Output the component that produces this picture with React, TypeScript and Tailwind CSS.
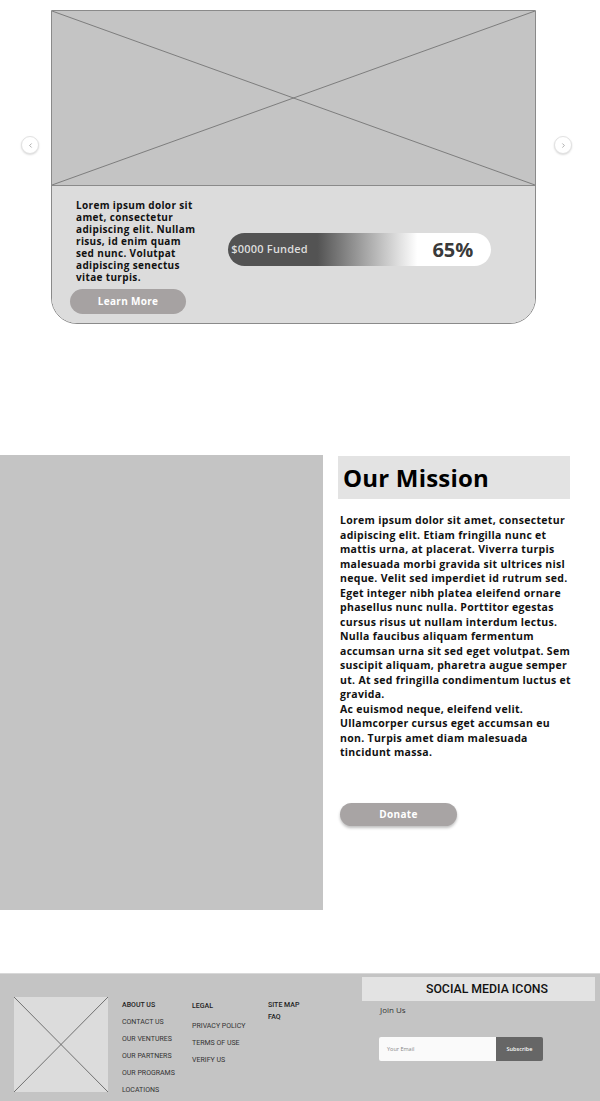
import { ChevronLeft, ChevronRight } from 'lucide-react'

const missionLines = [
  'Lorem ipsum dolor sit amet, consectetur',
  'adipiscing elit. Etiam fringilla nunc et',
  'mattis urna, at placerat. Viverra turpis',
  'malesuada morbi gravida sit ultrices nisl',
  'neque. Velit sed imperdiet id rutrum sed.',
  'Eget integer nibh platea eleifend ornare',
  'phasellus nunc nulla. Porttitor egestas',
  'cursus risus ut nullam interdum lectus.',
  'Nulla faucibus aliquam fermentum',
  'accumsan urna sit sed eget volutpat. Sem',
  'suscipit aliquam, pharetra augue semper',
  'ut. At sed fringilla condimentum luctus et',
  'gravida.',
  'Ac euismod neque, eleifend velit.',
  'Ullamcorper cursus eget accumsan eu',
  'non. Turpis amet diam malesuada',
  'tincidunt massa.',
]

const cardLines = [
  'Lorem ipsum dolor sit',
  'amet, consectetur',
  'adipiscing elit. Nullam',
  'risus, id enim quam',
  'sed nunc. Volutpat',
  'adipiscing senectus',
  'vitae turpis.',
]

const aboutLinks = ['CONTACT US', 'OUR VENTURES', 'OUR PARTNERS', 'OUR PROGRAMS', 'LOCATIONS']
const legalLinks = ['PRIVACY POLICY', 'TERMS OF USE', 'VERIFY US']

// placeholder image with a cross
function Cross({ stroke = '#6b6b6b' }: { stroke?: string }) {
  return (
    <svg className="absolute inset-0 w-full h-full" viewBox="0 0 100 100" preserveAspectRatio="none">
      <line x1="0" y1="0" x2="100" y2="100" stroke={stroke} strokeWidth="0.8" vectorEffect="non-scaling-stroke" />
      <line x1="100" y1="0" x2="0" y2="100" stroke={stroke} strokeWidth="0.8" vectorEffect="non-scaling-stroke" />
    </svg>
  )
}

function ArrowButton({ dir }: { dir: 'left' | 'right' }) {
  const Icon = dir === 'left' ? ChevronLeft : ChevronRight
  return (
    <div className="w-[18px] h-[18px] rounded-full bg-white border border-[#e2e2e2] shadow-[0_1px_2px_rgba(0,0,0,0.15)] flex items-center justify-center">
      <Icon size={7} strokeWidth={2} className="text-[#777]" />
    </div>
  )
}

export default function App() {
  return (
    <div className="w-[600px] h-[1101px] bg-white overflow-hidden font-['Open_Sans',sans-serif] text-black">
      {/* Carousel */}
      <div className="flex items-start pt-[10px]">
        <div className="ml-[21px] mt-[126px]">
          <ArrowButton dir="left" />
        </div>
        <div className="ml-[12px] w-[485px] h-[314px] border border-[#8a8a8a] rounded-b-[26px] overflow-hidden flex flex-col">
          <div className="relative h-[175px] bg-[#c4c4c4] border-b border-[#8a8a8a]">
            <Cross />
          </div>
          <div className="flex-1 bg-[#dcdcdc] flex items-start pl-[18px]">
            <div className="flex flex-col">
              <div className="pl-[6px] pt-[13px] text-[10px] leading-[12px] font-bold tracking-[0.35px] text-[#111]">
                {cardLines.map((l) => (
                  <div key={l} className="whitespace-nowrap">{l}</div>
                ))}
              </div>
              <button className="mt-[6px] w-[116px] h-[25px] rounded-full bg-[#a6a2a2] text-white text-[10px] font-bold tracking-[0.3px]">
                Learn More
              </button>
            </div>
            <div className="ml-[33px] mt-[47px] w-[263px] h-[33px] rounded-full bg-[linear-gradient(90deg,#535353_34%,#ffffff_72%)] flex items-center justify-between pl-[3px] pr-[18px]">
              <span className="text-[11px] font-semibold tracking-[0.2px] text-[#dddddd]">$0000 Funded</span>
              <span className="text-[20px] font-bold text-[#3a3a3a]">65%</span>
            </div>
          </div>
        </div>
        <div className="ml-[18px] mt-[126px]">
          <ArrowButton dir="right" />
        </div>
      </div>

      {/* Mission */}
      <div className="flex mt-[131px]">
        <div className="w-[323px] h-[455px] bg-[#c4c4c4]" />
        <div className="pl-[15px]">
          <div className="w-[232px] h-[43px] bg-[#e3e3e3] flex items-center pl-[5px] mt-[1px]">
            <h2 className="text-[24px] font-bold tracking-[0.2px] text-black">Our Mission</h2>
          </div>
          <div className="mt-[14px] pl-[2px] text-[10.5px] leading-[14.5px] font-bold tracking-[0.3px] text-[#111]">
            {missionLines.map((l) => (
              <div key={l} className="whitespace-nowrap">{l}</div>
            ))}
          </div>
          <button className="mt-[43px] ml-[2px] w-[117px] h-[23px] rounded-full bg-[#a8a4a4] text-white text-[10px] font-bold tracking-[0.3px] shadow-[0_2px_3px_rgba(0,0,0,0.25)]">
            Donate
          </button>
        </div>
      </div>

      {/* Footer */}
      <footer className="mt-[63px] h-[128px] bg-[#c4c4c4] border-t border-[#d8d8d8] flex font-['Roboto',sans-serif] text-[#333]">
        <div className="relative ml-[14px] mt-[23px] w-[94px] h-[95px] bg-[#dcdcdc]">
          <Cross stroke="#555" />
        </div>
        <div className="ml-[14px] mt-[27px] w-[70px] flex flex-col text-[7px] leading-[9px]">
          <span className="text-[#222] font-medium">ABOUT US</span>
          {aboutLinks.map((l) => (
            <span key={l} className="mt-[8px]">{l}</span>
          ))}
        </div>
        <div className="mt-[28px] w-[76px] flex flex-col text-[7px] leading-[9px]">
          <span className="text-[#222] font-medium">LEGAL</span>
          {legalLinks.map((l, i) => (
            <span key={l} className={i === 0 ? 'mt-[11px]' : 'mt-[8px]'}>{l}</span>
          ))}
        </div>
        <div className="mt-[27px] flex flex-col text-[7px] leading-[9px] font-medium text-[#222]">
          <span>SITE MAP</span>
          <span className="mt-[3px]">FAQ</span>
        </div>
        <div className="ml-auto mr-[5px] mt-[3px] w-[233px] flex flex-col">
          <div className="h-[24px] bg-[#e3e3e3] flex items-center justify-center pl-[17px] text-[12.3px] font-medium text-[#111]">
            SOCIAL MEDIA ICONS
          </div>
          <span className="mt-[3px] ml-[18px] text-[8px] font-['Open_Sans',sans-serif] text-[#333]">Join Us</span>
          <div className="mt-[21px] ml-[17px] flex h-[24px]">
            <div className="w-[117px] bg-[#fafafa] rounded-l-[2px] flex items-center pl-[8px] text-[5.5px] text-[#888] font-['Open_Sans',sans-serif]">
              Your Email
            </div>
            <div className="w-[47px] bg-[#666] rounded-r-[2px] flex items-center justify-center text-[5.5px] font-semibold text-white font-['Open_Sans',sans-serif]">
              Subscribe
            </div>
          </div>
        </div>
      </footer>
    </div>
  )
}
